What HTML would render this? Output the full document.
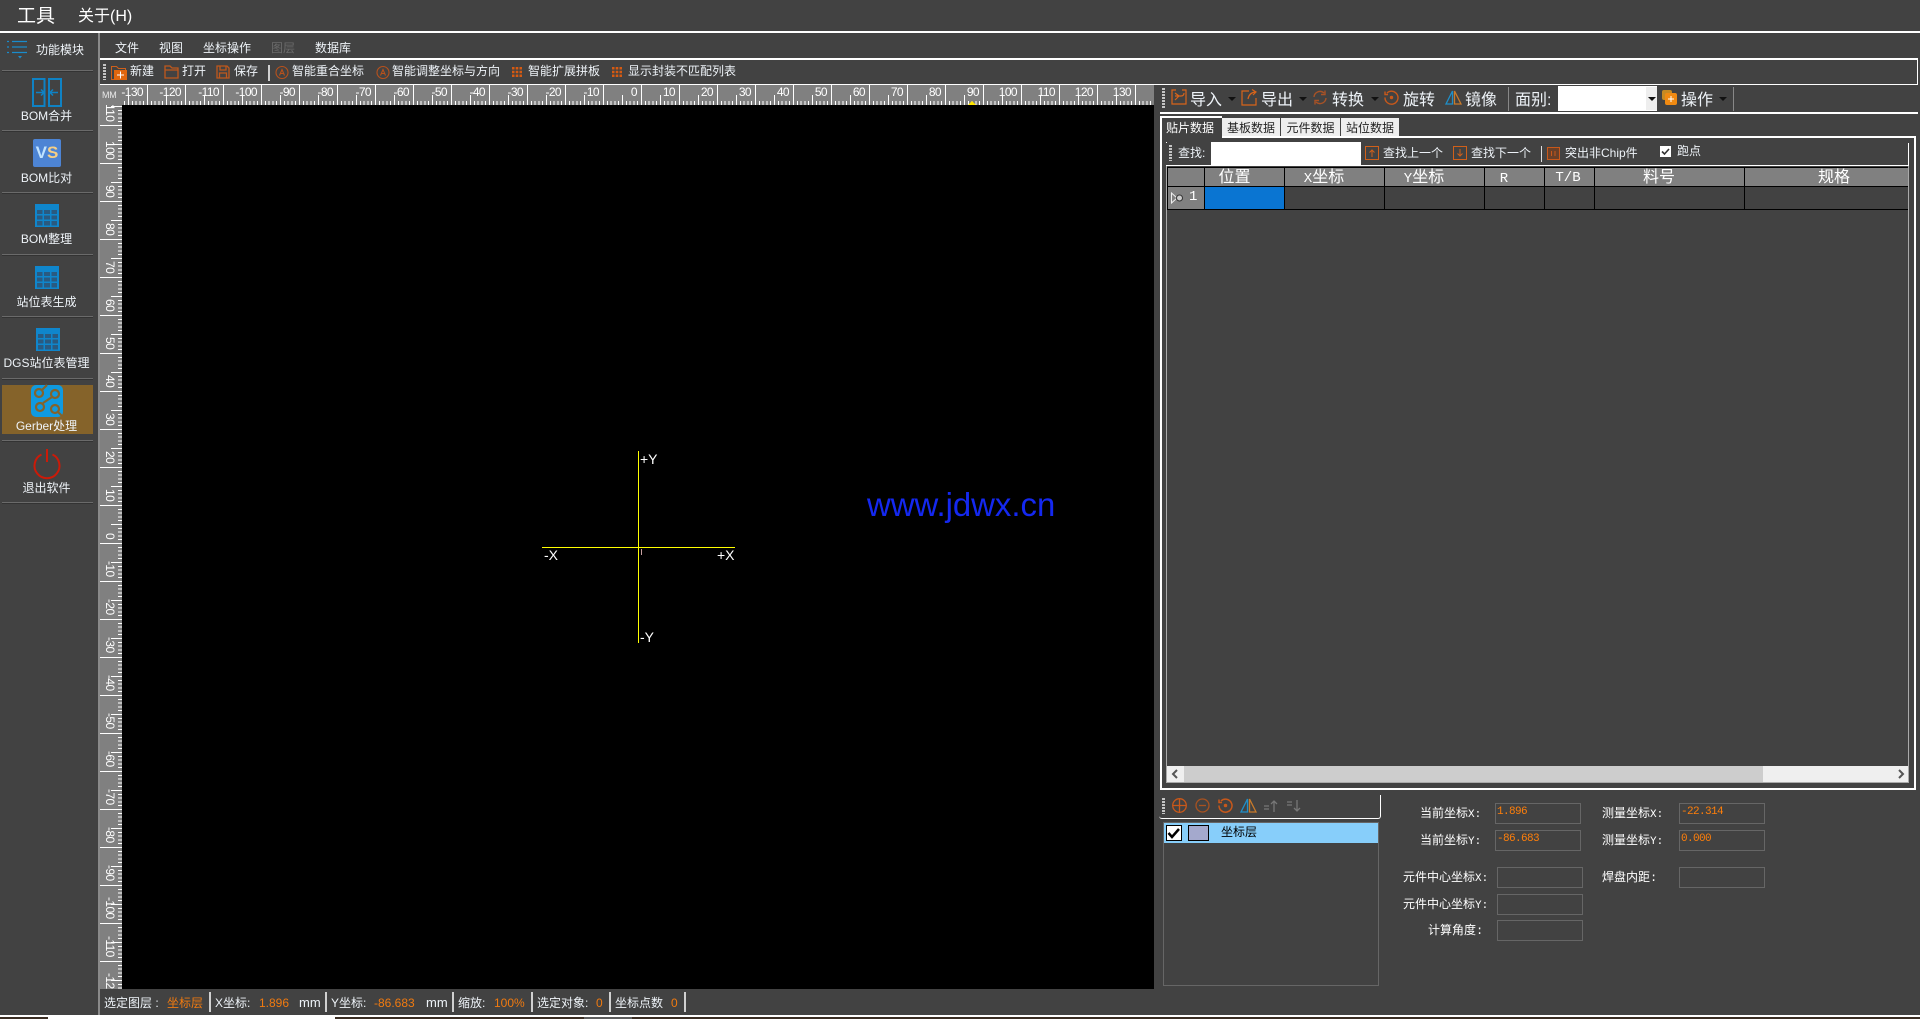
<!DOCTYPE html>
<html lang="zh"><head><meta charset="utf-8"><title>工具</title>
<style>
*{box-sizing:border-box}
html,body{margin:0;padding:0;width:1920px;height:1019px;overflow:hidden;background:#424242}
body{position:relative;font:12px/16px "Liberation Sans","Noto Sans CJK SC",sans-serif;color:#eef3f8}
.a{position:absolute}
.t{position:absolute;white-space:nowrap;line-height:16px}
.c{text-align:center}
.b{font-size:16px;line-height:20px}
.s{font-family:"Liberation Mono","WenQuanYi Zen Hei","Noto Sans CJK SC",monospace;color:#fff}
.o{color:#f07a10}
.w{background:#fff}
.sep{position:absolute;background:#d0d0d0;width:2px}
.sl{position:absolute;left:2px;width:91px;height:2px;background:linear-gradient(#6a6a6a 50%,#333 50%)}
.rx{position:absolute;top:85px;width:34px;text-align:right;line-height:14px;color:#fff;letter-spacing:-.6px}
.ry{position:absolute;left:103px;height:34px;width:14px;writing-mode:vertical-rl;text-align:right;line-height:14px;color:#fff;letter-spacing:-.6px}
.in{position:absolute;border:1px solid #666;height:21px;width:86px}
.v{position:absolute;font:11px/14px "Liberation Mono",monospace;letter-spacing:-.6px;color:#ff7f0a;white-space:nowrap}
.ic{position:absolute;overflow:visible}
.grip{position:absolute;width:3px;background:repeating-linear-gradient(#c4c4c4 0 2px,#424242 2px 3px)}
.th{position:absolute;top:168px;height:20px;text-align:center;font:16px/20px "Liberation Mono","WenQuanYi Zen Hei","Noto Sans CJK SC",monospace;color:#fff}
.th span{font-size:14px}
.tab{position:absolute;top:118px;height:20px;background:#eee;color:#222;text-align:center;line-height:21px}
.vl{position:absolute;width:1px;background:#000;top:167px;height:43px}
.arr{position:absolute;width:0;height:0;border:4px solid transparent;border-top-color:#111;border-bottom:0}
</style></head><body>

<!-- top bar -->
<div class="t" style="left:17px;top:6px;font-size:19px;line-height:22px;color:#fff">工具</div>
<div class="t" style="left:78px;top:7px;font-size:16px;line-height:20px;color:#fff">关于(H)</div>
<div class="a w" style="left:0;top:31px;width:1920px;height:2px"></div>
<div class="a" style="left:98px;top:33px;width:2px;height:983px;background:#8a8a8a"></div>

<!-- sidebar -->
<svg class="ic" style="left:7px;top:40px" width="21" height="19" fill="none" stroke="#1a8ccc" stroke-width="1.3"><path d="M0 1.500h2M5 1.500h15M0 7h2M5 7h15M0 12.500h2M5 12.500h15"/><path d="M11 16h4l-2 2.500z" fill="#1a8ccc" stroke="none"/></svg>
<div class="t" style="left:36px;top:42px">功能模块</div>
<div class="sl" style="top:70px"></div>

<svg class="ic" style="left:32px;top:78px" width="30" height="30" fill="none" stroke="#0f82c4" stroke-width="2"><rect x="1" y="1" width="11.500" height="27"/><rect x="17" y="1" width="12" height="27"/><path d="M4 14.500h8M9 11.500l3 3-3 3M26 14.500h-8M21 11.500l-3 3 3 3" stroke-width="1.500"/></svg>
<div class="t c" style="left:0;width:93px;top:108px">BOM合并</div>
<div class="sl" style="top:130px"></div>

<div class="a" style="left:33px;top:139px;width:28px;height:28px;background:#4d84d4;border-radius:2px;text-align:center;font:bold 17px/28px 'Liberation Sans',sans-serif"><span style="color:#bfe2ff">V</span><span style="color:#f6cf86">S</span></div>
<div class="t c" style="left:0;width:93px;top:170px">BOM比对</div>
<div class="sl" style="top:192px"></div>

<svg class="ic" style="left:35px;top:204px" width="24" height="23"><rect width="24" height="23" fill="#0f86cc"/><path d="M2 6h5.500v4H2zM9 6h6v4H9zM16.500 6H22v4h-5.500zM2 11.500h5.500v4H2zM9 11.500h6v4H9zM16.500 11.500H22v4h-5.500zM2 17h5.500v4.500H2zM9 17h6v4.500H9zM16.500 17H22v4.500h-5.500z" fill="#2a5a80"/></svg>
<div class="t c" style="left:0;width:93px;top:231px">BOM整理</div>
<div class="sl" style="top:254px"></div>

<svg class="ic" style="left:35px;top:266px" width="24" height="23"><rect width="24" height="23" fill="#0f86cc"/><path d="M2 6h5.500v4H2zM9 6h6v4H9zM16.500 6H22v4h-5.500zM2 11.500h5.500v4H2zM9 11.500h6v4H9zM16.500 11.500H22v4h-5.500zM2 17h5.500v4.500H2zM9 17h6v4.500H9zM16.500 17H22v4.500h-5.500z" fill="#2a5a80"/></svg>
<div class="t c" style="left:0;width:93px;top:294px">站位表生成</div>
<div class="sl" style="top:316px"></div>

<svg class="ic" style="left:36px;top:328px" width="24" height="23"><rect width="24" height="23" fill="#0f86cc"/><path d="M2 6h5.500v4H2zM9 6h6v4H9zM16.500 6H22v4h-5.500zM2 11.500h5.500v4H2zM9 11.500h6v4H9zM16.500 11.500H22v4h-5.500zM2 17h5.500v4.500H2zM9 17h6v4.500H9zM16.500 17H22v4.500h-5.500z" fill="#2a5a80"/></svg>
<div class="t c" style="left:0;width:93px;top:355px">DGS站位表管理</div>
<div class="sl" style="top:378px"></div>

<div class="a" style="left:2px;top:385px;width:91px;height:49px;background:#85632a"></div>
<svg class="ic" style="left:31px;top:385px" width="32" height="32"><rect width="32" height="32" rx="5" fill="#0f9ae0"/><g fill="none" stroke="#85632a" stroke-width="2.200"><circle cx="8" cy="8" r="4"/><circle cx="24" cy="9" r="4"/><circle cx="9" cy="22" r="4"/><circle cx="24" cy="24" r="4"/><path d="M12 18l9-6M11 5l5-5M27 27l4 4M12 8h1"/></g></svg>
<div class="t c" style="left:0;width:93px;top:418px">Gerber处理</div>
<div class="sl" style="top:440px"></div>

<svg class="ic" style="left:33px;top:449px" width="28" height="29" fill="none" stroke="#cc1a08" stroke-width="2"><path d="M14 0v13"/><path d="M8.500 5.500a12.500 12.500 0 1 0 11 0"/></svg>
<div class="t c" style="left:0;width:93px;top:480px">退出软件</div>
<div class="sl" style="top:502px"></div>

<!-- menu -->
<div class="t" style="left:115px;top:40px">文件</div>
<div class="t" style="left:159px;top:40px">视图</div>
<div class="t" style="left:203px;top:40px">坐标操作</div>
<div class="t" style="left:271px;top:40px;color:#6a6a6a">图层</div>
<div class="t" style="left:315px;top:40px">数据库</div>
<div class="a w" style="left:100px;top:58px;width:1818px;height:2px"></div>
<div class="a w" style="left:1917px;top:58px;width:1px;height:26px"></div>

<!-- toolbar -->
<div class="grip" style="left:103px;top:64px;height:16px"></div>
<svg class="ic" style="left:111px;top:64px" width="16" height="16"><path d="M.5 2.500h5l2 2h7v11H.5z" fill="none" stroke="#d0601a"/><rect x="3" y="6" width="13" height="10" fill="#e0660e"/><path d="M9.500 7.500v7M6 11h7" stroke="#fff"/></svg>
<div class="t" style="left:130px;top:63px">新建</div>
<svg class="ic" style="left:164px;top:65px" width="15" height="14" fill="none" stroke="#c0581c" stroke-width="1.300"><path d="M1 1h5l2 2h6v10H1zM1 5h13"/></svg>
<div class="t" style="left:182px;top:63px">打开</div>
<svg class="ic" style="left:216px;top:65px" width="14" height="14" fill="none" stroke="#c0581c" stroke-width="1.300"><path d="M1 1h10l2 2v10H1zM4 1v4h6V1M3.500 13V8h7v5"/></svg>
<div class="t" style="left:234px;top:63px">保存</div>
<div class="sep" style="left:268px;top:65px;height:16px"></div>
<svg class="ic" style="left:274px;top:64px" width="15" height="16" fill="none" stroke="#b8521c" stroke-width="1.100"><circle cx="8" cy="8.500" r="6"/><path d="M5.500 11.500l2.500-6 2.500 6M6.500 9.500h3"/></svg>
<div class="t" style="left:292px;top:63px">智能重合坐标</div>
<svg class="ic" style="left:375px;top:64px" width="15" height="16" fill="none" stroke="#b8521c" stroke-width="1.100"><circle cx="8" cy="8.500" r="6"/><path d="M5.500 11.500l2.500-6 2.500 6M6.500 9.500h3"/></svg>
<div class="t" style="left:392px;top:63px">智能调整坐标与方向</div>
<svg class="ic" style="left:512px;top:67px" width="10" height="10" fill="#d65a12"><path d="M0 0h2.500v2.500H0zM3.700 0h2.600v2.500H3.700zM7.500 0H10v2.500H7.500zM0 3.700h2.500v2.600H0zM3.700 3.700h2.600v2.600H3.700zM7.500 3.700H10v2.600H7.500zM0 7.500h2.500V10H0zM3.700 7.500h2.600V10H3.700zM7.500 7.500H10V10H7.500z"/></svg>
<div class="t" style="left:528px;top:63px">智能扩展拼板</div>
<svg class="ic" style="left:612px;top:67px" width="10" height="10" fill="#d65a12"><path d="M0 0h2.500v2.500H0zM3.700 0h2.600v2.500H3.700zM7.500 0H10v2.500H7.500zM0 3.700h2.500v2.600H0zM3.700 3.700h2.600v2.600H3.700zM7.500 3.700H10v2.600H7.500zM0 7.500h2.500V10H0zM3.700 7.500h2.600V10H3.700zM7.500 7.500H10V10H7.500z"/></svg>
<div class="t" style="left:628px;top:63px">显示封装不匹配列表</div>

<!-- rulers -->
<div class="a w" style="left:100px;top:84px;width:1818px;height:1px"></div>
<div class="a" style="left:100px;top:85px;width:1054px;height:20px;background:#808080;overflow:hidden">
<svg class="a" style="left:0;top:0" width="1054" height="20" shape-rendering="crispEdges"><defs><pattern id="pt" patternUnits="userSpaceOnUse" x="9" y="0" width="38" height="20"><path d="M.5 0v20M19.500 10v10M4.300 16v4M8.100 16v4M11.900 16v4M15.700 16v4M23.300 16v4M27.100 16v4M30.900 16v4M34.700 16v4" stroke="#fff" fill="none"/></pattern></defs><rect width="1054" height="20" fill="url(#pt)"/></svg>
</div>
<div class="a" style="left:100px;top:85px;width:22px;height:20px;background:#808080"></div>
<div class="t" style="left:102px;top:87px;font-size:9px;color:#e8e8e8;letter-spacing:-.2px">MM</div>
<div class="rx" style="left:109px">-130</div><div class="rx" style="left:147px">-120</div><div class="rx" style="left:185px">-110</div><div class="rx" style="left:223px">-100</div><div class="rx" style="left:261px">-90</div><div class="rx" style="left:299px">-80</div><div class="rx" style="left:337px">-70</div><div class="rx" style="left:375px">-60</div><div class="rx" style="left:413px">-50</div><div class="rx" style="left:451px">-40</div><div class="rx" style="left:489px">-30</div><div class="rx" style="left:527px">-20</div><div class="rx" style="left:565px">-10</div><div class="rx" style="left:603px">0</div><div class="rx" style="left:641px">10</div><div class="rx" style="left:679px">20</div><div class="rx" style="left:717px">30</div><div class="rx" style="left:755px">40</div><div class="rx" style="left:793px">50</div><div class="rx" style="left:831px">60</div><div class="rx" style="left:869px">70</div><div class="rx" style="left:907px">80</div><div class="rx" style="left:945px">90</div><div class="rx" style="left:983px">100</div><div class="rx" style="left:1021px">110</div><div class="rx" style="left:1059px">120</div><div class="rx" style="left:1097px">130</div>
<div class="a" style="left:968px;top:101px;width:0;height:0;border:4px solid transparent;border-top:0;border-bottom:4px solid #ffe600"></div>

<div class="a" style="left:100px;top:105px;width:22px;height:884px;background:#808080;overflow:hidden">
<svg class="a" style="left:0;top:0" width="22" height="884" shape-rendering="crispEdges"><defs><pattern id="pl" patternUnits="userSpaceOnUse" x="0" y="-18" width="22" height="38"><path d="M0 .5h22M11 19.500h11M18 4.300h4M18 8.100h4M18 11.900h4M18 15.700h4M18 23.300h4M18 27.100h4M18 30.900h4M18 34.700h4" stroke="#fff" fill="none"/></pattern></defs><rect width="22" height="884" fill="url(#pl)"/></svg>
<div class="ry" style="left:3px;top:-18px">110</div><div class="ry" style="left:3px;top:20px">100</div><div class="ry" style="left:3px;top:58px">90</div><div class="ry" style="left:3px;top:96px">80</div><div class="ry" style="left:3px;top:134px">70</div><div class="ry" style="left:3px;top:172px">60</div><div class="ry" style="left:3px;top:210px">50</div><div class="ry" style="left:3px;top:248px">40</div><div class="ry" style="left:3px;top:286px">30</div><div class="ry" style="left:3px;top:324px">20</div><div class="ry" style="left:3px;top:362px">10</div><div class="ry" style="left:3px;top:400px">0</div><div class="ry" style="left:3px;top:438px">-10</div><div class="ry" style="left:3px;top:476px">-20</div><div class="ry" style="left:3px;top:514px">-30</div><div class="ry" style="left:3px;top:552px">-40</div><div class="ry" style="left:3px;top:590px">-50</div><div class="ry" style="left:3px;top:628px">-60</div><div class="ry" style="left:3px;top:666px">-70</div><div class="ry" style="left:3px;top:704px">-80</div><div class="ry" style="left:3px;top:742px">-90</div><div class="ry" style="left:3px;top:780px">-100</div><div class="ry" style="left:3px;top:818px">-110</div><div class="ry" style="left:3px;top:856px">-120</div>
</div>

<!-- canvas -->
<div class="a" style="left:122px;top:105px;width:1032px;height:884px;background:#000"></div>
<div class="a" style="left:542px;top:547px;width:193px;height:1px;background:#ff0"></div>
<div class="a" style="left:638px;top:451px;width:1px;height:192px;background:#ff0"></div>
<div class="t" style="left:640px;top:451px;font-size:14px;color:#fff">+Y</div>
<div class="t" style="left:544px;top:547px;font-size:14px;color:#fff">-X</div>
<div class="t" style="left:717px;top:547px;font-size:14px;color:#fff">+X</div>
<div class="t" style="left:640px;top:629px;font-size:14px;color:#fff">-Y</div>
<div class="a" style="left:641px;top:549px;width:1px;height:6px;background:#c9a0a0"></div>
<div class="t" style="left:867px;top:485px;font-size:32.9px;line-height:40px;color:#1428f0">www.jdwx.cn</div>

<!-- right toolbar -->
<div class="a w" style="left:1160px;top:112px;width:758px;height:2px"></div>
<div class="grip" style="left:1162px;top:88px;height:20px"></div>
<svg class="ic" style="left:1171px;top:89px" width="16" height="16" fill="none" stroke="#d8641a" stroke-width="1.200"><path d="M5 1H1v14h14V1h-4M4 4l4 3-4 4M4 7h6q3 0 3-3"/></svg>
<div class="t b" style="left:1190px;top:91px">导入</div><div class="arr" style="left:1228px;top:97px"></div>
<svg class="ic" style="left:1241px;top:89px" width="17" height="17" fill="none" stroke="#d8641a" stroke-width="1.200"><path d="M8 2H1v14h14V9M7 10q1-6 7-7M11 .5l4 2.500-3 3"/></svg>
<div class="t b" style="left:1261px;top:91px">导出</div><div class="arr" style="left:1299px;top:97px"></div>
<svg class="ic" style="left:1312px;top:90px" width="16" height="15" fill="none" stroke="#a85226" stroke-width="1.400"><path d="M2 7a6 6 0 0 1 10-4M14 8a6 6 0 0 1-10 4M13 .5v4H9M3 14.500v-4h4"/></svg>
<div class="t b" style="left:1332px;top:91px">转换</div><div class="arr" style="left:1371px;top:97px"></div>
<svg class="ic" style="left:1384px;top:90px" width="15" height="15" fill="none" stroke="#c8581a" stroke-width="1.400"><path d="M3 3a6.500 6.500 0 1 1-2 4.500M1 1.500v3h3"/><circle cx="7.500" cy="7.500" r="1" fill="#c8581a"/></svg>
<div class="t b" style="left:1403px;top:91px">旋转</div>
<svg class="ic" style="left:1445px;top:90px" width="17" height="15" fill="none" stroke-width="1.300"><path d="M7.500 1L1 14h6.500z" stroke="#1f8fc8"/><path d="M9.500 1L16 14H9.500z" stroke="#c87a2a"/></svg>
<div class="t b" style="left:1465px;top:91px">镜像</div>
<div class="a" style="left:1508px;top:87px;width:1px;height:24px;background:#888"></div>
<div class="t b" style="left:1515px;top:91px">面别:</div>
<div class="a w" style="left:1558px;top:86px;width:99px;height:25px"></div>
<div class="a" style="left:1646px;top:87px;width:11px;height:23px;background:#eee"></div>
<div class="arr" style="left:1648px;top:97px"></div>
<svg class="ic" style="left:1662px;top:90px" width="15" height="15"><rect width="10" height="10" rx="2" fill="#c78a22"/><rect x="3" y="3" width="12" height="12" rx="2" fill="#f08a12"/><path d="M9 6v6M6 9h6" stroke="#fff"/></svg>
<div class="t b" style="left:1681px;top:91px">操作</div><div class="arr" style="left:1719px;top:97px"></div>
<div class="a" style="left:1733px;top:87px;width:1px;height:24px;background:#888"></div>

<!-- tabs + frame -->
<div class="tab" style="left:1222px;width:58px">基板数据</div>
<div class="tab" style="left:1281px;width:59px">元件数据</div>
<div class="tab" style="left:1341px;width:58px">站位数据</div>
<div class="a" style="left:1160px;top:136px;width:756px;height:654px;border:2px solid #fff;border-top-width:2px"></div>
<div class="a" style="left:1160px;top:116px;width:62px;height:22px;background:#424242;border:solid #fff;border-width:2px 0 0 2px"></div>
<div class="t" style="left:1166px;top:120px;color:#fff">贴片数据</div>

<!-- search bar -->
<div class="a w" style="left:1166px;top:165px;width:743px;height:1px"></div>
<div class="a w" style="left:1908px;top:143px;width:1px;height:22px"></div>
<div class="a w" style="left:1166px;top:142px;width:1px;height:1px"></div>
<div class="grip" style="left:1169px;top:145px;height:16px"></div>
<div class="t" style="left:1178px;top:145px">查找:</div>
<div class="a w" style="left:1211px;top:142px;width:150px;height:24px"></div>
<svg class="ic" style="left:1365px;top:146px" width="14" height="14" fill="none" stroke="#d0601a"><rect x=".5" y=".5" width="13" height="13"/><path d="M7 11V4M4.500 6.500L7 4l2.500 2.500"/></svg>
<div class="t" style="left:1383px;top:145px">查找上一个</div>
<svg class="ic" style="left:1453px;top:146px" width="14" height="14" fill="none" stroke="#d0601a"><rect x=".5" y=".5" width="13" height="13"/><path d="M7 3v7M4.500 7.500L7 10l2.500-2.500"/></svg>
<div class="t" style="left:1471px;top:145px">查找下一个</div>
<div class="a" style="left:1541px;top:146px;width:1px;height:16px;background:#ddd"></div>
<svg class="ic" style="left:1547px;top:147px" width="13" height="13" fill="none" stroke="#c8581a"><rect x=".5" y=".5" width="12" height="12" fill="#6a4028"/><path d="M4.500 4v5M8 4v5"/></svg>
<div class="t" style="left:1565px;top:145px">突出非Chip件</div>
<div class="a w" style="left:1660px;top:146px;width:11px;height:11px"></div>
<svg class="ic" style="left:1660px;top:146px" width="11" height="11" fill="none" stroke="#333" stroke-width="1.600"><path d="M2 5.500l2.500 2.500 4.500-5"/></svg>
<div class="t" style="left:1677px;top:143px">跑点</div>

<!-- table -->
<div class="a" style="left:1166px;top:166px;width:743px;height:617px;border:solid #aaa;border-width:1px;border-top:0"></div>
<div class="a" style="left:1167px;top:167px;width:741px;height:20px;background:#808080;border-top:1px solid #000;border-bottom:1px solid #000"></div>
<div class="a" style="left:1167px;top:187px;width:741px;height:23px;border-bottom:1px solid #000"></div>
<div class="a" style="left:1168px;top:187px;width:36px;height:22px;background:#808080"></div>
<div class="a" style="left:1205px;top:187px;width:79px;height:22px;background:#0a75d2"></div>
<div class="vl" style="left:1167px"></div><div class="vl" style="left:1204px"></div><div class="vl" style="left:1284px"></div><div class="vl" style="left:1384px"></div><div class="vl" style="left:1484px"></div><div class="vl" style="left:1544px"></div><div class="vl" style="left:1594px"></div><div class="vl" style="left:1744px"></div>
<div class="th" style="left:1205px;width:59px">位置</div>
<div class="th" style="left:1285px;width:78px"><span>X</span>坐标</div>
<div class="th" style="left:1385px;width:78px"><span>Y</span>坐标</div>
<div class="th" style="left:1485px;width:38px"><span>R</span></div>
<div class="th" style="left:1545px;width:46px;font-size:14px">T/B</div>
<div class="th" style="left:1595px;width:128px">料号</div>
<div class="th" style="left:1745px;width:178px">规格</div>
<svg class="ic" style="left:1171px;top:192px" width="13" height="12" fill="none" stroke="#eee"><path d="M.5 1v10L6 6z"/><circle cx="8.500" cy="6" r="3" fill="#ccc" stroke="#333"/></svg>
<div class="t" style="left:1189px;top:187px;font:14px/20px 'Liberation Mono',monospace;color:#fff">1</div>

<!-- scrollbar -->
<div class="a" style="left:1167px;top:766px;width:741px;height:16px;background:#efefef"></div>
<div class="a" style="left:1184px;top:766px;width:579px;height:16px;background:#cdcdcd"></div>
<svg class="ic" style="left:1171px;top:769px" width="8" height="10" fill="none" stroke="#555" stroke-width="2"><path d="M6 1L2 5l4 4"/></svg>
<svg class="ic" style="left:1897px;top:769px" width="8" height="10" fill="none" stroke="#555" stroke-width="2"><path d="M2 1l4 4-4 4"/></svg>

<!-- layer toolbar -->
<div class="a" style="left:1159px;top:795px;width:222px;height:24px;border:solid #fff;border-width:0 1px 1px 0;border-radius:0 0 3px 3px"></div>
<div class="grip" style="left:1162px;top:798px;height:16px"></div>
<svg class="ic" style="left:1172px;top:798px" width="15" height="15" fill="none" stroke="#c8581a" stroke-width="1.300"><circle cx="7.500" cy="7.500" r="6.800"/><path d="M7.500 1v13M1 7.500h13"/></svg>
<svg class="ic" style="left:1195px;top:798px" width="15" height="15" fill="none" stroke="#a85220" stroke-width="1.300"><circle cx="7.500" cy="7.500" r="6.500"/><path d="M4 7.500h7"/></svg>
<svg class="ic" style="left:1218px;top:798px" width="15" height="15" fill="none" stroke="#c8581a" stroke-width="1.500"><path d="M3 3a6.500 6.500 0 1 1-2 4.500M1 1.500v3h3"/><circle cx="7.500" cy="7.500" r="1" fill="#c8581a"/></svg>
<svg class="ic" style="left:1240px;top:798px" width="17" height="15" fill="none" stroke-width="1.300"><path d="M7.500 1L1 14h6.500z" stroke="#1f8fc8"/><path d="M9.500 1L16 14H9.500z" stroke="#c87a2a"/></svg>
<svg class="ic" style="left:1264px;top:800px" width="14" height="12" fill="none" stroke="#777" stroke-width="1.300"><path d="M0 6h5M0 9h5M10 12V1M7 4l3-3 3 3"/></svg>
<svg class="ic" style="left:1287px;top:800px" width="14" height="12" fill="none" stroke="#777" stroke-width="1.300"><path d="M0 2h5M0 5h5M10 0v11M7 8l3 3 3-3"/></svg>

<!-- layer list -->
<div class="a" style="left:1163px;top:822px;width:216px;height:164px;border:1px solid #666"></div>
<div class="a" style="left:1164px;top:823px;width:214px;height:20px;background:#87cefa"></div>
<div class="a w" style="left:1166px;top:825px;width:16px;height:16px;border:1px solid #000"></div>
<svg class="ic" style="left:1167px;top:826px" width="14" height="14" fill="none" stroke="#000" stroke-width="2.500"><path d="M1.500 7l3.500 4 7-8"/></svg>
<div class="a" style="left:1188px;top:825px;width:21px;height:16px;background:#a4a9cd;border:1px solid #000"></div>
<div class="t" style="left:1221px;top:824px;color:#000">坐标层</div>

<!-- fields -->
<div class="t s" style="left:1420px;top:806px">当前坐标<span style="font-size:11px">X:</span></div>
<div class="in" style="left:1495px;top:803px"></div><div class="v" style="left:1497px;top:805px">1.896</div>
<div class="t s" style="left:1420px;top:833px">当前坐标<span style="font-size:11px">Y:</span></div>
<div class="in" style="left:1495px;top:830px"></div><div class="v" style="left:1497px;top:832px">-86.683</div>
<div class="t s" style="left:1403px;top:870px">元件中心坐标<span style="font-size:11px">X:</span></div>
<div class="in" style="left:1497px;top:867px"></div>
<div class="t s" style="left:1403px;top:897px">元件中心坐标<span style="font-size:11px">Y:</span></div>
<div class="in" style="left:1497px;top:894px"></div>
<div class="t s" style="left:1428px;top:923px">计算角度:</div>
<div class="in" style="left:1497px;top:920px"></div>
<div class="t s" style="left:1602px;top:806px">测量坐标<span style="font-size:11px">X:</span></div>
<div class="in" style="left:1679px;top:803px"></div><div class="v" style="left:1681px;top:805px">-22.314</div>
<div class="t s" style="left:1602px;top:833px">测量坐标<span style="font-size:11px">Y:</span></div>
<div class="in" style="left:1679px;top:830px"></div><div class="v" style="left:1681px;top:832px">0.000</div>
<div class="t s" style="left:1602px;top:870px">焊盘内距:</div>
<div class="in" style="left:1679px;top:867px"></div>

<!-- status bar -->
<div class="t" style="left:104px;top:995px">选定图层 :</div>
<div class="t o" style="left:167px;top:995px">坐标层</div>
<div class="sep" style="left:209px;top:992px;height:20px"></div>
<div class="t" style="left:215px;top:995px">X坐标:</div>
<div class="t o" style="left:259px;top:995px">1.896</div>
<div class="t" style="left:299px;top:995px;font-size:13px">mm</div>
<div class="sep" style="left:325px;top:992px;height:20px"></div>
<div class="t" style="left:331px;top:995px">Y坐标:</div>
<div class="t o" style="left:374px;top:995px">-86.683</div>
<div class="t" style="left:426px;top:995px;font-size:13px">mm</div>
<div class="sep" style="left:452px;top:992px;height:20px"></div>
<div class="t" style="left:458px;top:995px">缩放:</div>
<div class="t o" style="left:494px;top:995px">100%</div>
<div class="sep" style="left:531px;top:992px;height:20px"></div>
<div class="t" style="left:537px;top:995px">选定对象:</div>
<div class="t o" style="left:596px;top:995px">0</div>
<div class="sep" style="left:609px;top:992px;height:20px"></div>
<div class="t" style="left:615px;top:995px">坐标点数</div>
<div class="t o" style="left:671px;top:995px">0</div>
<div class="sep" style="left:684px;top:992px;height:20px"></div>

<!-- bottom -->
<div class="a w" style="left:0;top:1015px;width:1920px;height:2px"></div>
<div class="a" style="left:0;top:1017px;width:1920px;height:2px;background:#3b2e24"></div>
<div class="a w" style="left:48px;top:1017px;width:287px;height:2px"></div>
<div class="a" style="left:584px;top:1017px;width:48px;height:2px;background:#5f5f5f"></div>
</body></html>
